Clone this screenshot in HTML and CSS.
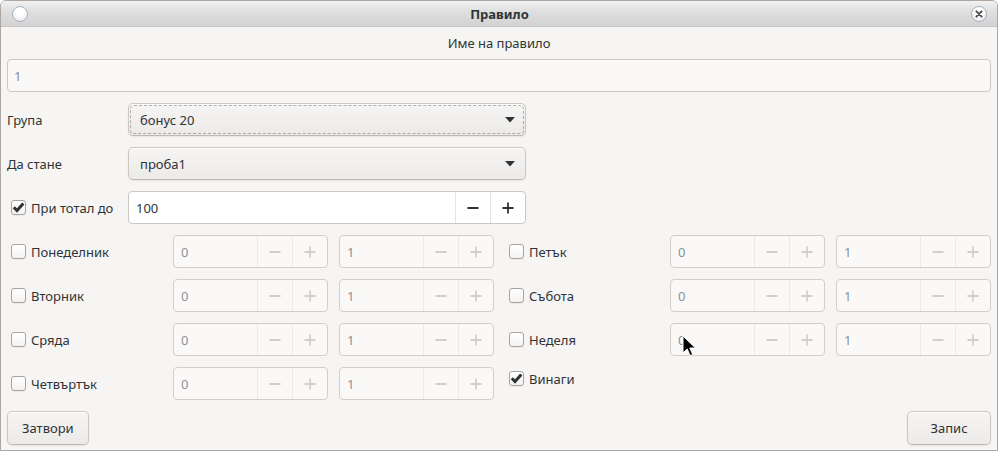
FILE: index.html
```html
<!DOCTYPE html>
<html lang="bg">
<head>
<meta charset="utf-8">
<title>Правило</title>
<link rel="stylesheet" href="styles.css">
</head>
<body>
<div class="window">
  <header class="titlebar">
    <span class="tb-btn tb-menu"></span>
    <span class="tb-title">Правило</span>
    <span class="tb-btn tb-close"><svg viewBox="0 0 16 16" width="16" height="16"><path d="M5 5l6 6M11 5l-6 6"/></svg></span>
  </header>
  <main class="content">
    <div class="caption">Име на правило</div>
    <div class="entry name-entry">1</div>

    <div class="form-top">
      <div class="label">Група</div>
      <div class="combo focused"><span>бонус 20</span><svg class="arrow" viewBox="0 0 10 6" width="10" height="6"><path d="M0 0h10L5 5.5z"/></svg></div>
      <div class="label">Да стане</div>
      <div class="combo"><span>проба1</span><svg class="arrow" viewBox="0 0 10 6" width="10" height="6"><path d="M0 0h10L5 5.5z"/></svg></div>
      <div class="check"><span class="box on"><svg viewBox="0 0 15 15" width="15" height="15"><path d="M2.8 7.3l3.2 3.3 6.3-7.2"/></svg></span><span>При тотал до</span></div>
      <div class="spin spin-on">
        <span class="spin-val">100</span>
        <span class="spin-btn"><svg viewBox="0 0 16 16" width="16" height="16"><path d="M2.5 8h11"/></svg></span>
        <span class="spin-btn"><svg viewBox="0 0 16 16" width="16" height="16"><path d="M2.5 8h11M8 2.5v11"/></svg></span>
      </div>
    </div>

    <div class="days">
      <div class="check"><span class="box"></span><span>Понеделник</span></div>
      <div class="spin spin-off"><span class="spin-val">0</span><span class="spin-btn"><svg viewBox="0 0 16 16" width="16" height="16"><path d="M2.5 8h11"/></svg></span><span class="spin-btn"><svg viewBox="0 0 16 16" width="16" height="16"><path d="M2.5 8h11M8 2.5v11"/></svg></span></div>
      <div class="spin spin-off"><span class="spin-val">1</span><span class="spin-btn"><svg viewBox="0 0 16 16" width="16" height="16"><path d="M2.5 8h11"/></svg></span><span class="spin-btn"><svg viewBox="0 0 16 16" width="16" height="16"><path d="M2.5 8h11M8 2.5v11"/></svg></span></div>
      <div class="check"><span class="box"></span><span>Петък</span></div>
      <div class="spin spin-off"><span class="spin-val">0</span><span class="spin-btn"><svg viewBox="0 0 16 16" width="16" height="16"><path d="M2.5 8h11"/></svg></span><span class="spin-btn"><svg viewBox="0 0 16 16" width="16" height="16"><path d="M2.5 8h11M8 2.5v11"/></svg></span></div>
      <div class="spin spin-off"><span class="spin-val">1</span><span class="spin-btn"><svg viewBox="0 0 16 16" width="16" height="16"><path d="M2.5 8h11"/></svg></span><span class="spin-btn"><svg viewBox="0 0 16 16" width="16" height="16"><path d="M2.5 8h11M8 2.5v11"/></svg></span></div>

      <div class="check"><span class="box"></span><span>Вторник</span></div>
      <div class="spin spin-off"><span class="spin-val">0</span><span class="spin-btn"><svg viewBox="0 0 16 16" width="16" height="16"><path d="M2.5 8h11"/></svg></span><span class="spin-btn"><svg viewBox="0 0 16 16" width="16" height="16"><path d="M2.5 8h11M8 2.5v11"/></svg></span></div>
      <div class="spin spin-off"><span class="spin-val">1</span><span class="spin-btn"><svg viewBox="0 0 16 16" width="16" height="16"><path d="M2.5 8h11"/></svg></span><span class="spin-btn"><svg viewBox="0 0 16 16" width="16" height="16"><path d="M2.5 8h11M8 2.5v11"/></svg></span></div>
      <div class="check"><span class="box"></span><span>Събота</span></div>
      <div class="spin spin-off"><span class="spin-val">0</span><span class="spin-btn"><svg viewBox="0 0 16 16" width="16" height="16"><path d="M2.5 8h11"/></svg></span><span class="spin-btn"><svg viewBox="0 0 16 16" width="16" height="16"><path d="M2.5 8h11M8 2.5v11"/></svg></span></div>
      <div class="spin spin-off"><span class="spin-val">1</span><span class="spin-btn"><svg viewBox="0 0 16 16" width="16" height="16"><path d="M2.5 8h11"/></svg></span><span class="spin-btn"><svg viewBox="0 0 16 16" width="16" height="16"><path d="M2.5 8h11M8 2.5v11"/></svg></span></div>

      <div class="check"><span class="box"></span><span>Сряда</span></div>
      <div class="spin spin-off"><span class="spin-val">0</span><span class="spin-btn"><svg viewBox="0 0 16 16" width="16" height="16"><path d="M2.5 8h11"/></svg></span><span class="spin-btn"><svg viewBox="0 0 16 16" width="16" height="16"><path d="M2.5 8h11M8 2.5v11"/></svg></span></div>
      <div class="spin spin-off"><span class="spin-val">1</span><span class="spin-btn"><svg viewBox="0 0 16 16" width="16" height="16"><path d="M2.5 8h11"/></svg></span><span class="spin-btn"><svg viewBox="0 0 16 16" width="16" height="16"><path d="M2.5 8h11M8 2.5v11"/></svg></span></div>
      <div class="check"><span class="box"></span><span>Неделя</span></div>
      <div class="spin spin-off"><span class="spin-val">0</span><span class="spin-btn"><svg viewBox="0 0 16 16" width="16" height="16"><path d="M2.5 8h11"/></svg></span><span class="spin-btn"><svg viewBox="0 0 16 16" width="16" height="16"><path d="M2.5 8h11M8 2.5v11"/></svg></span></div>
      <div class="spin spin-off"><span class="spin-val">1</span><span class="spin-btn"><svg viewBox="0 0 16 16" width="16" height="16"><path d="M2.5 8h11"/></svg></span><span class="spin-btn"><svg viewBox="0 0 16 16" width="16" height="16"><path d="M2.5 8h11M8 2.5v11"/></svg></span></div>

      <div class="check"><span class="box"></span><span>Четвъртък</span></div>
      <div class="spin spin-off"><span class="spin-val">0</span><span class="spin-btn"><svg viewBox="0 0 16 16" width="16" height="16"><path d="M2.5 8h11"/></svg></span><span class="spin-btn"><svg viewBox="0 0 16 16" width="16" height="16"><path d="M2.5 8h11M8 2.5v11"/></svg></span></div>
      <div class="spin spin-off"><span class="spin-val">1</span><span class="spin-btn"><svg viewBox="0 0 16 16" width="16" height="16"><path d="M2.5 8h11"/></svg></span><span class="spin-btn"><svg viewBox="0 0 16 16" width="16" height="16"><path d="M2.5 8h11M8 2.5v11"/></svg></span></div>
      <div class="check check-top"><span class="box on"><svg viewBox="0 0 15 15" width="15" height="15"><path d="M2.8 7.3l3.2 3.3 6.3-7.2"/></svg></span><span>Винаги</span></div>
    </div>

    <div class="actions">
      <button class="btn">Затвори</button>
      <button class="btn btn-wide">Запис</button>
    </div>
  </main>
  <svg class="cursor" viewBox="0 0 14 22" width="14" height="22"><path d="M1 1v17l4.2-4 2.9 6.6 2.6-1.1-2.9-6.5H13.5z"/></svg>
</div>
</body>
</html>
```

FILE: styles.css
```css
* { box-sizing: border-box; }
html, body { margin: 0; padding: 0; background: #ffffff; }
body {
  font-family: "Noto Sans", "Open Sans", "DejaVu Sans", sans-serif;
  font-size: 13px;
  color: #2e3436;
}
.window {
  width: 998px;
  height: 451px;
  border: 1px solid #aca7a2;
  border-radius: 6px 6px 0 0;
  background: #f6f5f4;
  position: relative;
  overflow: hidden;
  display: flex;
  flex-direction: column;
}
.titlebar {
  flex: none;
  height: 26px;
  display: grid;
  grid-template-columns: 1fr auto 1fr;
  align-items: center;
  padding: 0 10px 0 11px;
  background: linear-gradient(#f1f1f1, #dedede 45%, #d3d3d3);
  border-bottom: 1px solid #c8c8c8;
}
.tb-title { font-weight: bold; font-size: 13px; color: #2e3436; }
.tb-btn {
  width: 16px;
  height: 16px;
  border-radius: 50%;
  border: 1px solid #a7b1c2;
  background: radial-gradient(circle at 50% 35%, #ffffff 30%, #e4e4e4 100%);
  display: flex;
  align-items: center;
  justify-content: center;
}
.tb-menu { justify-self: start; }
.tb-close { justify-self: end; }
.tb-close svg { display: block; }
.tb-close path { stroke: #4d4d4d; stroke-width: 2.2; fill: none; stroke-linecap: round; }

.content {
  flex: 1;
  display: flex;
  flex-direction: column;
  padding: 0 6px;
}
.caption {
  margin-top: 6px;
  line-height: 20px;
  text-align: center;
}
.entry {
  margin-top: 6px;
  height: 33px;
  border: 1px solid #cdc7c2;
  border-radius: 4px;
  background: #faf9f8;
  color: #8b8e8f;
  display: flex;
  align-items: center;
  padding: 0 6px;
}

.form-top {
  margin-top: 11px;
  display: grid;
  grid-template-columns: 121px 398px;
  grid-auto-rows: 33px;
  row-gap: 11px;
}
.label { display: flex; align-items: center; }
.combo {
  position: relative;
  display: flex;
  align-items: center;
  justify-content: space-between;
  padding: 0 10px 0 11px;
  border: 1px solid #cdc7c2;
  border-bottom-color: #bfb8b1;
  border-radius: 5px;
  background: linear-gradient(to top, #edebe9 2px, #f6f5f4);
  box-shadow: inset 0 1px rgba(255,255,255,0.8), 0 1px 2px rgba(0,0,0,0.07);
}
.combo.focused::after {
  content: "";
  position: absolute;
  inset: 1px;
  border: 1px dashed rgba(46,52,54,0.35);
  border-radius: 4px;
}
.arrow { display: block; }
.arrow path { fill: #2e3436; }

.check {
  display: flex;
  align-items: center;
  gap: 5px;
  padding-left: 4px;
}
.check-top { align-self: start; height: 23px; }
.box {
  flex: none;
  width: 15px;
  height: 15px;
  border: 1px solid #aaa39d;
  border-radius: 3px;
  background: linear-gradient(#ffffff, #f4f3f2);
  box-shadow: inset 0 1px rgba(255,255,255,0.9), 0 1px rgba(0,0,0,0.04);
  display: flex;
  align-items: center;
  justify-content: center;
}
.box svg { display: block; margin: -1px; }
.box path { stroke: #2e3436; stroke-width: 3; fill: none; stroke-linecap: butt; stroke-linejoin: miter; }

.spin {
  display: flex;
  border: 1px solid #cdc7c2;
  border-radius: 4px;
  overflow: hidden;
}
.spin-val {
  flex: 1;
  display: flex;
  align-items: center;
  padding-left: 7px;
}
.spin-btn {
  flex: none;
  width: 35px;
  display: flex;
  align-items: center;
  justify-content: center;
  border-left: 1px solid #e6e3e0;
}
.spin-btn svg { display: block; }
.spin-btn path { fill: none; stroke-width: 1.8; }
.spin-on { background: #ffffff; }
.spin-on .spin-btn path { stroke: #2e3436; }
.spin-off { background: #faf9f8; border-color: #d3cec9; }
.spin-off .spin-val { color: #8b929b; }
.spin-off .spin-btn { border-left-color: #eceae7; }
.spin-off .spin-btn path { stroke: #d2cfcb; }

.days {
  margin-top: 11px;
  display: grid;
  grid-template-columns: 155px 155px 155px 154px 155px 155px;
  column-gap: 11px;
  grid-auto-rows: 33px;
  row-gap: 11px;
}

.actions {
  margin-top: 11px;
  display: flex;
  justify-content: space-between;
}
.btn {
  height: 34px;
  padding: 0 14px;
  font-family: inherit;
  font-size: 13px;
  color: #2e3436;
  border: 1px solid #cdc7c2;
  border-bottom-color: #bfb8b1;
  border-radius: 5px;
  background: linear-gradient(to top, #edebe9 2px, #f6f5f4);
  box-shadow: inset 0 1px rgba(255,255,255,0.8), 0 1px 2px rgba(0,0,0,0.07);
}
.btn-wide { min-width: 84px; }

.cursor {
  position: absolute;
  left: 681px;
  top: 334px;
}
.cursor path { fill: #000000; stroke: #ffffff; stroke-width: 1; stroke-linejoin: round; }
```
